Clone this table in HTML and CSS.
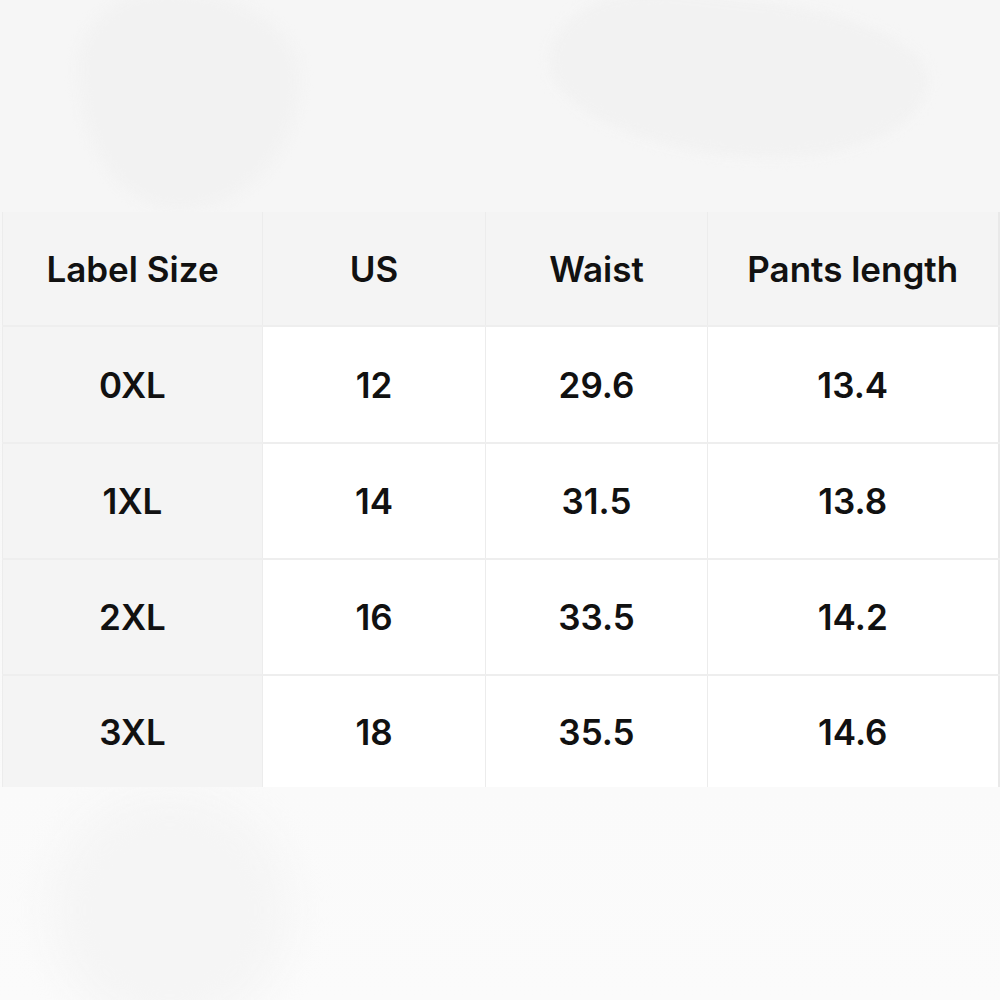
FILE: index.html
```html
<!DOCTYPE html>
<html lang="en">
<head>
<meta charset="utf-8">
<title>Size chart</title>
<link rel="stylesheet" href="styles.css">
</head>
<body>
<div class="page">
  <div class="blob blob-left"></div>
  <div class="blob blob-right"></div>
  <div class="blob blob-bottom"></div>
  <div class="top-space"></div>
  <table class="chart">
    <colgroup>
      <col class="c1"><col class="c2"><col class="c3"><col class="c4">
    </colgroup>
    <thead>
      <tr class="head-row">
        <th class="label">Label Size</th>
        <th>US</th>
        <th>Waist</th>
        <th>Pants length</th>
      </tr>
    </thead>
    <tbody>
      <tr class="row-a"><th class="label">0XL</th><td>12</td><td>29.6</td><td>13.4</td></tr>
      <tr class="row-b"><th class="label">1XL</th><td>14</td><td>31.5</td><td>13.8</td></tr>
      <tr class="row-b"><th class="label">2XL</th><td>16</td><td>33.5</td><td>14.2</td></tr>
      <tr class="row-a"><th class="label">3XL</th><td>18</td><td>35.5</td><td>14.6</td></tr>
    </tbody>
  </table>
</div>
</body>
</html>
```
FILE: styles.css
```css
html, body {
  margin: 0;
  padding: 0;
}
body {
  width: 1000px;
  height: 1000px;
  overflow: hidden;
  background: #fafafa;
  font-family: "Inter", "Liberation Sans", sans-serif;
  color: #111;
}
.page {
  position: relative;
  width: 1000px;
  height: 1000px;
  overflow: hidden;
  background: linear-gradient(to bottom, #f6f6f6 0px, #f6f6f6 212px, #fafafa 790px, #fbfbfb 1000px);
}
.blob {
  position: absolute;
  border-radius: 50%;
  filter: blur(6px);
}
.blob-left {
  left: 78px;
  top: -10px;
  width: 222px;
  height: 220px;
  background: #f2f2f2;
  border-radius: 40% 60% 55% 45% / 35% 40% 60% 65%;
}
.blob-right {
  left: 548px;
  top: 0px;
  width: 380px;
  height: 156px;
  background: #f2f2f2;
  border-radius: 30% 45% 50% 50% / 50% 40% 60% 50%;
  transform: rotate(6deg);
}
.blob-bottom {
  left: 50px;
  top: 790px;
  width: 240px;
  height: 240px;
  background: #f5f5f5;
  filter: blur(18px);
}
.top-space {
  height: 212px;
}
.chart {
  position: relative;
  margin-left: 2px;
  width: 996px;
  border-collapse: collapse;
  table-layout: fixed;
  border-right: 2px solid #e9e9e9;
}
.c1 { width: 260px; }
.c2 { width: 223px; }
.c3 { width: 222px; }
.c4 { width: 291px; }
.chart th, .chart td {
  text-align: center;
  vertical-align: middle;
  font-size: 35px;
  font-weight: 600;
  padding: 0;
  border-left: 1px solid #ececec;
  border-top: 2px solid #eeeeee;
  background: #ffffff;
  color: #111;
}
.chart thead th {
  border-top: none;
  background: #f4f4f4;
  height: 113px;
}
.chart th.label {
  background: #f4f4f4;
}
.row-a th, .row-a td { height: 115px; }
.row-b th, .row-b td { height: 114px; }
.chart tbody tr:last-child th, .chart tbody tr:last-child td { height: 111px; }
```
